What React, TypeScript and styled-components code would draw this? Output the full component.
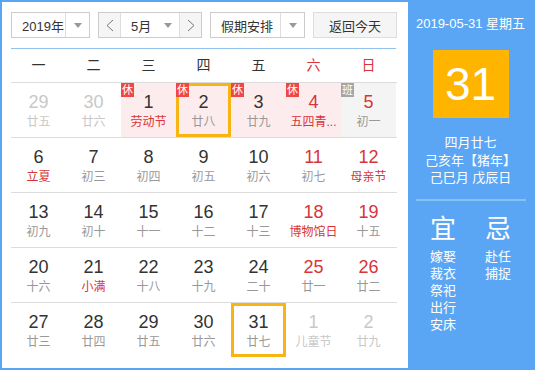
import * as React from 'react'
import styled, { createGlobalStyle } from 'styled-components'

const blue = '#5aa6f4'
const orange = '#f7b412'
const red = '#d8343a'
const cellWidth = 55

const GlobalStyle = createGlobalStyle`
  body {
    margin: 0;
    font-family: 'Liberation Sans', 'Noto Sans CJK SC', sans-serif;
    background: #fff;
  }
`

const Frame = styled.div`
  display: flex;
  width: 535px;
  height: 370px;
  box-sizing: border-box;
  border: 2px solid ${blue};
  background: #fff;
`

const Left = styled.div`
  width: 406px;
  box-sizing: border-box;
  padding: 10px 11px 0 9px;
`

const Toolbar = styled.div`
  display: flex;
  gap: 8px;
  height: 26px;
  font-size: 13px;
  color: #333;
  white-space: nowrap;
`

const Select = styled.div<{ $w: number }>`
  display: flex;
  width: ${(p) => p.$w}px;
  box-sizing: border-box;
  border: 1px solid #ccc;
  background: #fff;
`

const SelectLabel = styled.div`
  flex: 1;
  min-width: 0;
  display: flex;
  align-items: center;
  padding-left: 10px;
`

const ArrowBox = styled.div<{ $border?: boolean }>`
  flex: none;
  width: 23px;
  display: flex;
  align-items: center;
  justify-content: center;
  border-left: ${(p) => (p.$border ? '1px solid #ddd' : 'none')};
  &::after {
    content: '';
    border-left: 4px solid transparent;
    border-right: 4px solid transparent;
    border-top: 5px solid #999;
  }
`

const NavButton = styled.div`
  flex: none;
  width: 21px;
  display: flex;
  align-items: center;
  justify-content: center;
  background: #f5f5f5;
`

const MonthPart = styled.div`
  flex: 1;
  display: flex;
  align-items: center;
  border-left: 1px solid #ddd;
  border-right: 1px solid #ddd;
  padding-left: 10px;
`

const MonthText = styled.span`
  flex: 1;
`

const TodayButton = styled.div`
  flex: 1;
  display: flex;
  align-items: center;
  justify-content: center;
  border: 1px solid #ddd;
  background: #f5f5f5;
`

const HeadLine = styled.div`
  margin-top: 10px;
  height: 1px;
  width: ${cellWidth * 7}px;
  background: #94c2ef;
`

const WeekRow = styled.div`
  display: grid;
  grid-template-columns: repeat(7, ${cellWidth}px);
  height: 33px;
  line-height: 33px;
  font-size: 14px;
  text-align: center;
`

const WeekDay = styled.div<{ $weekend: boolean }>`
  color: ${(p) => (p.$weekend ? red : '#333')};
`

const Row = styled.div`
  display: grid;
  grid-template-columns: repeat(7, ${cellWidth}px);
  border-top: 1px solid #dcdcdc;
`

type Kind = 'normal' | 'holiday' | 'work'

const Cell = styled.div<{ $kind: Kind; $selected: boolean }>`
  position: relative;
  height: 54px;
  box-sizing: border-box;
  display: flex;
  flex-direction: column;
  align-items: center;
  padding-top: 9px;
  background: ${(p) =>
    p.$kind === 'holiday' ? '#fdeced' : p.$kind === 'work' ? '#f4f4f4' : 'transparent'};
  box-shadow: ${(p) => (p.$selected ? `inset 0 0 0 3px ${orange}` : 'none')};
`

const Num = styled.div<{ $color: string }>`
  font-size: 18px;
  line-height: 20px;
  color: ${(p) => p.$color};
`

const Lunar = styled.div<{ $color: string }>`
  margin-top: 2px;
  font-size: 12px;
  line-height: 16px;
  color: ${(p) => p.$color};
  white-space: nowrap;
`

const Badge = styled.div<{ $work: boolean }>`
  position: absolute;
  left: 0;
  top: 0;
  width: 13px;
  height: 14px;
  line-height: 14px;
  font-size: 11px;
  text-align: center;
  color: #fff;
  background: ${(p) => (p.$work ? '#a5a5a5' : '#ef4646')};
`

const Right = styled.div`
  flex: 1;
  display: flex;
  flex-direction: column;
  align-items: center;
  background: ${blue};
  color: #fff;
`

const DateLine = styled.div`
  margin-top: 13px;
  font-size: 13px;
  line-height: 18px;
`

const BigDay = styled.div`
  margin-top: 17px;
  width: 76px;
  height: 68px;
  display: flex;
  align-items: center;
  justify-content: center;
  background: #ffb400;
  font-size: 46px;
`

const LunarInfo = styled.div`
  margin-top: 16px;
  font-size: 13px;
  line-height: 17.5px;
  text-align: center;
`

const Divider = styled.div`
  margin-top: 12px;
  width: 110px;
  height: 2px;
  background: #88c0f8;
`

const Advice = styled.div`
  margin-top: 13px;
  display: flex;
  gap: 5px;
`

const AdviceCol = styled.div`
  width: 50px;
  display: flex;
  flex-direction: column;
  align-items: center;
`

const AdviceTitle = styled.div`
  font-size: 26px;
  line-height: 30px;
  margin-bottom: 4px;
`

const AdviceItem = styled.div`
  font-size: 13px;
  line-height: 17px;
`

const Chevron = ({ dir }: { dir: 'l' | 'r' }) => (
  <svg width="8" height="13" viewBox="0 0 8 13">
    <polyline
      points={dir === 'l' ? '7,1 1,6.5 7,12' : '1,1 7,6.5 1,12'}
      fill="none"
      stroke="#777"
      strokeWidth="1"
    />
  </svg>
)

interface Day {
  n: number
  l: string
  other?: boolean
  redNum?: boolean
  redL?: boolean
  kind?: Kind
  sel?: boolean
}

const rows: Day[][] = [
  [
    { n: 29, l: '廿五', other: true },
    { n: 30, l: '廿六', other: true },
    { n: 1, l: '劳动节', redL: true, kind: 'holiday' },
    { n: 2, l: '廿八', kind: 'holiday', sel: true },
    { n: 3, l: '廿九', kind: 'holiday' },
    { n: 4, l: '五四青...', redNum: true, redL: true, kind: 'holiday' },
    { n: 5, l: '初一', redNum: true, kind: 'work' },
  ],
  [
    { n: 6, l: '立夏', redL: true },
    { n: 7, l: '初三' },
    { n: 8, l: '初四' },
    { n: 9, l: '初五' },
    { n: 10, l: '初六' },
    { n: 11, l: '初七', redNum: true },
    { n: 12, l: '母亲节', redNum: true, redL: true },
  ],
  [
    { n: 13, l: '初九' },
    { n: 14, l: '初十' },
    { n: 15, l: '十一' },
    { n: 16, l: '十二' },
    { n: 17, l: '十三' },
    { n: 18, l: '博物馆日', redNum: true, redL: true },
    { n: 19, l: '十五', redNum: true },
  ],
  [
    { n: 20, l: '十六' },
    { n: 21, l: '小满', redL: true },
    { n: 22, l: '十八' },
    { n: 23, l: '十九' },
    { n: 24, l: '二十' },
    { n: 25, l: '廿一', redNum: true },
    { n: 26, l: '廿二', redNum: true },
  ],
  [
    { n: 27, l: '廿三' },
    { n: 28, l: '廿四' },
    { n: 29, l: '廿五' },
    { n: 30, l: '廿六' },
    { n: 31, l: '廿七', sel: true },
    { n: 1, l: '儿童节', other: true },
    { n: 2, l: '廿九', other: true },
  ],
]

const weekDays = ['一', '二', '三', '四', '五', '六', '日']

const numColor = (d: Day) => (d.other ? '#c8c8c8' : d.redNum ? red : '#333')
const lunarColor = (d: Day) => (d.other ? '#c8c8c8' : d.redL ? red : '#999')

export default function App() {
  return (
    <>
      <GlobalStyle />
      <Frame>
        <Left>
          <Toolbar>
            <Select $w={79}>
              <SelectLabel>2019年</SelectLabel>
              <ArrowBox $border />
            </Select>
            <Select $w={104}>
              <NavButton>
                <Chevron dir="l" />
              </NavButton>
              <MonthPart>
                <MonthText>5月</MonthText>
                <ArrowBox />
              </MonthPart>
              <NavButton>
                <Chevron dir="r" />
              </NavButton>
            </Select>
            <Select $w={95}>
              <SelectLabel>假期安排</SelectLabel>
              <ArrowBox $border />
            </Select>
            <TodayButton>返回今天</TodayButton>
          </Toolbar>
          <HeadLine />
          <WeekRow>
            {weekDays.map((w, i) => (
              <WeekDay key={w} $weekend={i >= 5}>
                {w}
              </WeekDay>
            ))}
          </WeekRow>
          {rows.map((row, ri) => (
            <Row key={ri}>
              {row.map((d, di) => (
                <Cell key={di} $kind={d.kind || 'normal'} $selected={!!d.sel}>
                  {d.kind === 'holiday' && <Badge $work={false}>休</Badge>}
                  {d.kind === 'work' && <Badge $work>班</Badge>}
                  <Num $color={numColor(d)}>{d.n}</Num>
                  <Lunar $color={lunarColor(d)}>{d.l}</Lunar>
                </Cell>
              ))}
            </Row>
          ))}
        </Left>
        <Right>
          <DateLine>2019-05-31 星期五</DateLine>
          <BigDay>31</BigDay>
          <LunarInfo>
            四月廿七
            <br />
            己亥年【猪年】
            <br />
            己巳月 戊辰日
          </LunarInfo>
          <Divider />
          <Advice>
            <AdviceCol>
              <AdviceTitle>宜</AdviceTitle>
              {['嫁娶', '裁衣', '祭祀', '出行', '安床'].map((t) => (
                <AdviceItem key={t}>{t}</AdviceItem>
              ))}
            </AdviceCol>
            <AdviceCol>
              <AdviceTitle>忌</AdviceTitle>
              {['赴任', '捕捉'].map((t) => (
                <AdviceItem key={t}>{t}</AdviceItem>
              ))}
            </AdviceCol>
          </Advice>
        </Right>
      </Frame>
    </>
  )
}
